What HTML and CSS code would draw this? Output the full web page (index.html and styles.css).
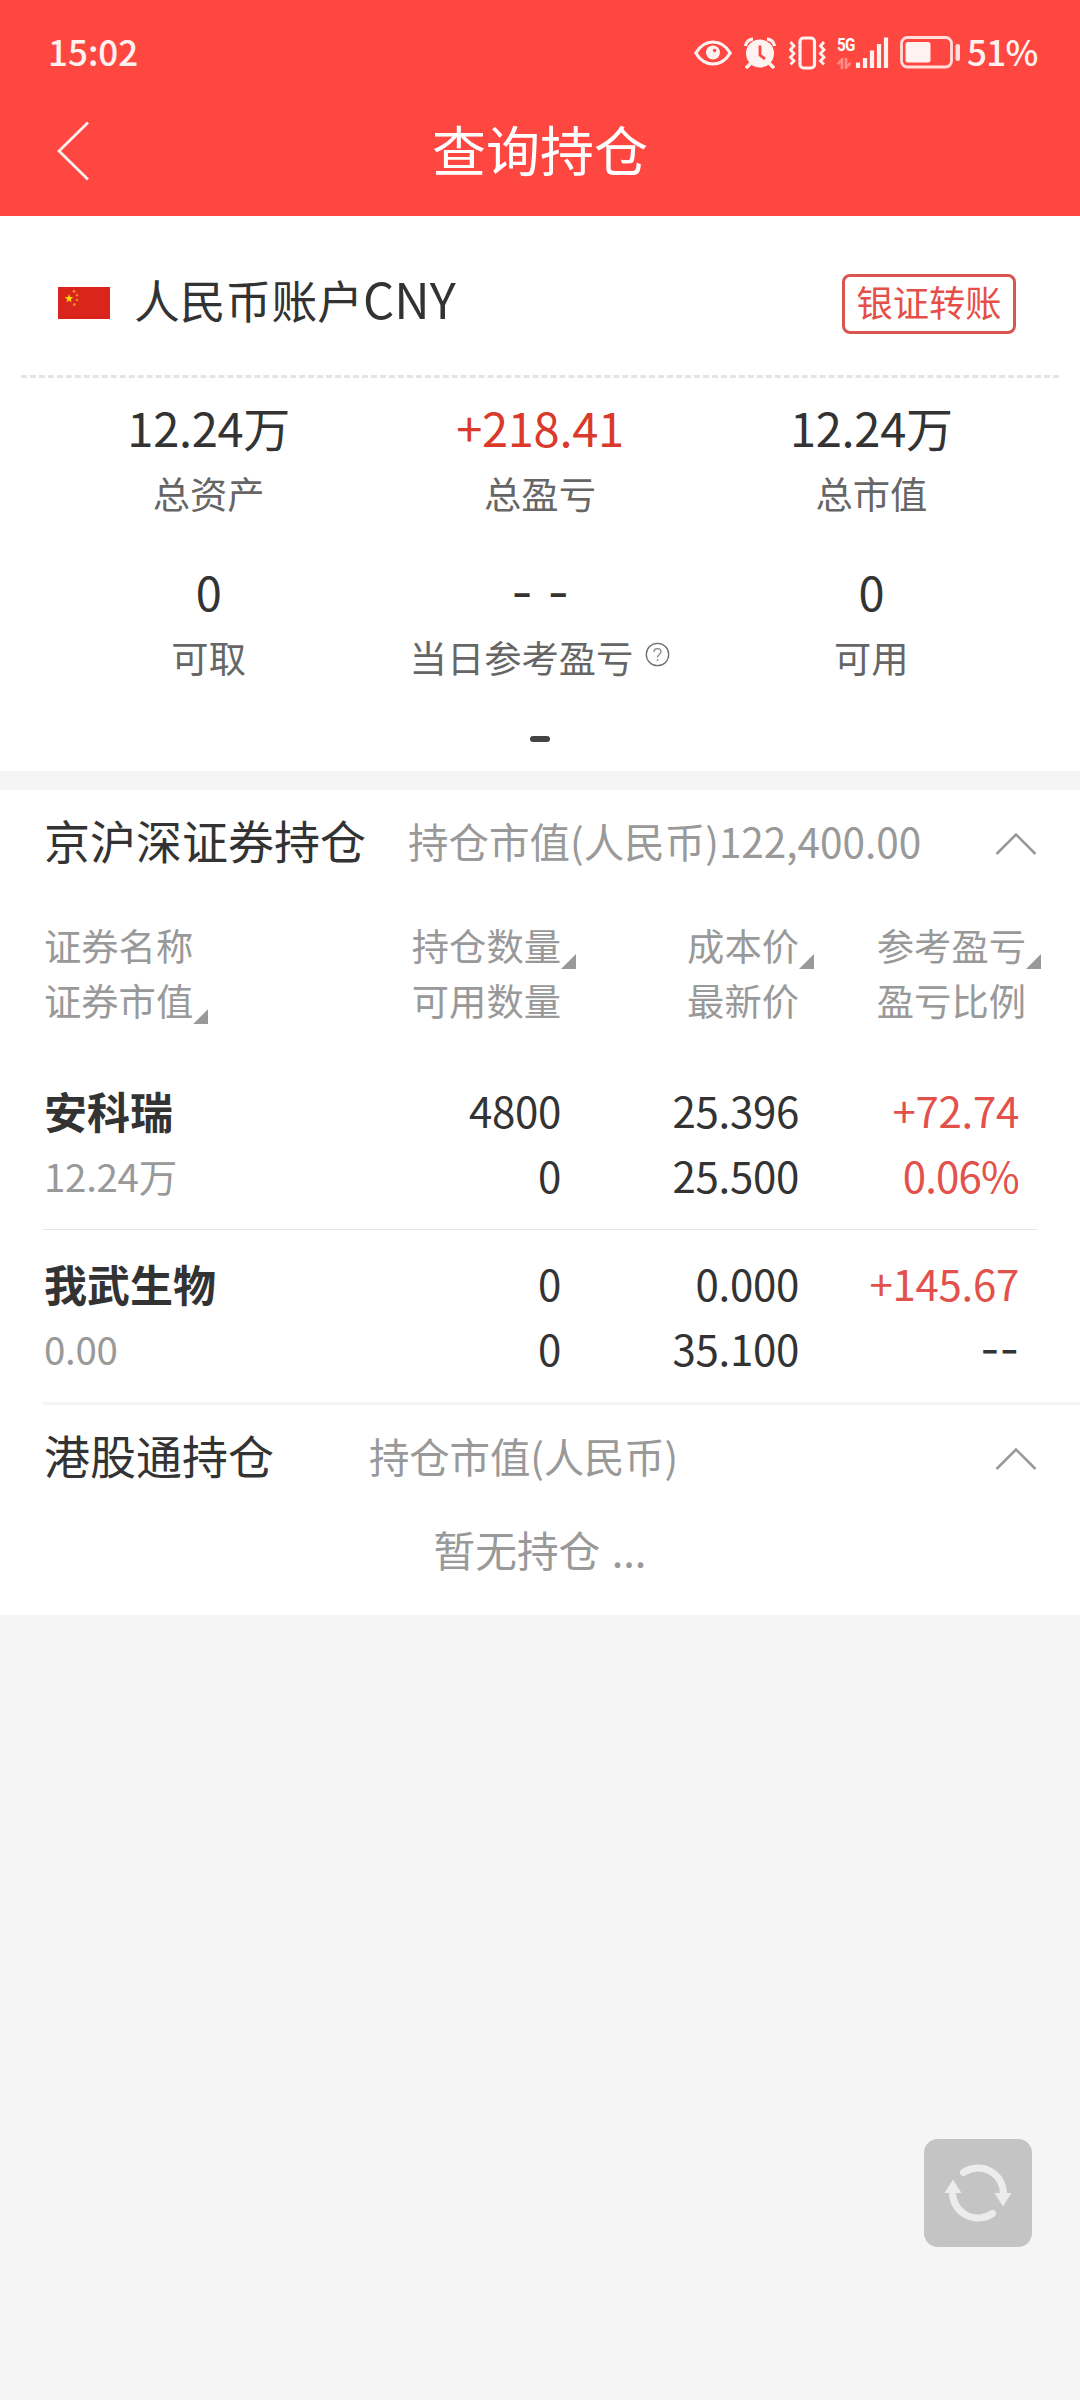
FILE: index.html
```html
<!DOCTYPE html>
<html lang="zh-CN">
<head>
<meta charset="utf-8">
<title>查询持仓</title>
<link rel="stylesheet" href="styles.css">
</head>
<body>
<header class="top">
  <div class="status">
    <span class="time">15:02</span>
    <div class="status-icons">
      <svg class="i-eye" width="38" height="26" viewBox="0 0 38 26"><path d="M1.800 13C6 6 12 2 19 2s13 4 17.200 11C32 20 26 24 19 24S6 20 1.800 13Z" fill="none" stroke="#fff3f1" stroke-width="3.200"/><circle cx="19" cy="12.500" r="7" fill="#fff3f1"/><circle cx="20.600" cy="10.500" r="1.700" fill="#ff4742"/></svg>
      <svg class="i-alarm" width="32" height="32" viewBox="0 0 32 32"><circle cx="16" cy="16.500" r="14" fill="#fff3f1"/><path d="M1.500 9A9 9 0 0 1 9 1.800M30.500 9A9 9 0 0 0 23 1.800" fill="none" stroke="#fff3f1" stroke-width="3.200"/><path d="M6 27l-3 3M26 27l3 3" stroke="#fff3f1" stroke-width="3.500" stroke-linecap="round"/><path d="M16 8.500V18l5 4" fill="none" stroke="#ff4742" stroke-width="2.800"/></svg>
      <svg class="i-vib" width="38" height="34" viewBox="0 0 38 34"><rect x="12" y="2" width="14.500" height="30" rx="3.500" fill="none" stroke="#fff3f1" stroke-width="3.200"/><path d="M2.500 6l3.500 4-3.500 3.800L6 17.500l-3.500 3.800L6 25l-3.500 3.500M36 6l-3.500 4 3.500 3.800-3.500 3.700 3.500 3.800L32.500 25l3.500 3.500" fill="none" stroke="#fff3f1" stroke-width="2.800"/></svg>
      <div class="cell">
        <div class="net"><span class="net-type">5G</span>
          <svg width="15" height="11" viewBox="0 0 15 11"><path d="M5 11V1.500L.800 6M9 0v9.500L13.500 5" fill="none" stroke="#ff8a86" stroke-width="2.600"/></svg>
        </div>
        <svg class="bars" width="34" height="33" viewBox="0 0 34 33"><path d="M3 32v-5.500M10 32v-10M17 32V14.500M24 32V8M31 32V1.500" stroke="#fff3f1" stroke-width="4.200"/></svg>
      </div>
      <svg class="i-bat" width="61" height="33" viewBox="0 0 61 33"><rect x="1.500" y="1.500" width="50" height="29.500" rx="6" fill="none" stroke="#ffdedb" stroke-width="2.800"/><rect x="5.500" y="6" width="25" height="20.500" rx="2.500" fill="#fff3f1"/><rect x="55.500" y="8" width="4.500" height="17" rx="2" fill="#ffdedb"/></svg>
      <span class="pct">51%</span>
    </div>
  </div>
  <nav class="nav">
    <svg class="back" width="36" height="62" viewBox="0 0 36 62"><path d="M34 2.500L5 31l29 28.500" fill="none" stroke="#fff0ee" stroke-width="2.800"/></svg>
    <h1>查询持仓</h1>
  </nav>
</header>

<section class="account">
  <div class="account-head">
    <svg class="flag" width="52" height="32" viewBox="0 0 52 32"><rect width="52" height="32" fill="#da251d"/><path d="M11 7l1 3.100 3.300.1-2.600 2 .9 3.100-2.600-1.900-2.600 1.900.9-3.100-2.600-2 3.300-.1Z" fill="#ffde00"/><g fill="#e8881c"><circle cx="16" cy="4.300" r="1.500"/><circle cx="19" cy="8.300" r="1.300"/><circle cx="19" cy="13" r="1.300"/><circle cx="16.300" cy="17.500" r="1.500"/></g></svg>
    <span class="account-name">人民币账户<span class="latin">CNY</span></span>
    <a class="transfer">银证转账</a>
  </div>
  <div class="stats">
    <div class="stat"><div class="value">12.24万</div><div class="label">总资产</div></div>
    <div class="stat"><div class="value up">+218.41</div><div class="label">总盈亏</div></div>
    <div class="stat"><div class="value">12.24万</div><div class="label">总市值</div></div>
    <div class="stat"><div class="value">0</div><div class="label">可取</div></div>
    <div class="stat"><div class="value dash">- -</div><div class="label">当日参考盈亏<svg class="help" width="25" height="25" viewBox="0 0 25 25"><circle cx="12.500" cy="12.500" r="11.200" fill="none" stroke="#6f6f6f" stroke-width="1.300"/><path d="M9 10c0-4.500 7-4.500 7-.3 0 2.600-3.500 2.800-3.500 5.800M12.500 17.300v1.600" fill="none" stroke="#7f838c" stroke-width="1.300"/></svg></div></div>
    <div class="stat"><div class="value">0</div><div class="label">可用</div></div>
  </div>
  <div class="pager"></div>
</section>

<section class="holdings">
  <div class="sec-head">
    <h2>京沪深证券持仓</h2>
    <span class="sum">持仓市值(人民币)122,400.00</span>
    <svg class="chev" width="42" height="24" viewBox="0 0 42 24"><path d="M1.500 22L21 2.500 40.500 22" fill="none" stroke="#999" stroke-width="2.500"/></svg>
  </div>
  <div class="cols head">
    <div class="c1"><div>证券名称</div><div>证券市值<i class="tri"></i></div></div>
    <div class="c2"><div>持仓数量<i class="tri"></i></div><div>可用数量</div></div>
    <div class="c3"><div>成本价<i class="tri"></i></div><div>最新价</div></div>
    <div class="c4"><div>参考盈亏<i class="tri"></i></div><div>盈亏比例</div></div>
  </div>
  <div class="cols row">
    <div class="c1"><div class="name">安科瑞</div><div class="worth">12.24万</div></div>
    <div class="c2"><div>4800</div><div>0</div></div>
    <div class="c3"><div>25.396</div><div>25.500</div></div>
    <div class="c4 gain"><div>+72.74</div><div class="ratio">0.06%</div></div>
  </div>
  <div class="cols row">
    <div class="c1"><div class="name">我武生物</div><div class="worth">0.00</div></div>
    <div class="c2"><div>0</div><div>0</div></div>
    <div class="c3"><div>0.000</div><div>35.100</div></div>
    <div class="c4"><div class="gain">+145.67</div><div class="dash">--</div></div>
  </div>
</section>

<section class="hk">
  <div class="sec-head">
    <h2>港股通持仓</h2>
    <span class="sum">持仓市值(人民币)</span>
    <svg class="chev" width="42" height="24" viewBox="0 0 42 24"><path d="M1.500 22L21 2.500 40.500 22" fill="none" stroke="#999" stroke-width="2.500"/></svg>
  </div>
  <p class="empty">暂无持仓 ...</p>
</section>

<button class="refresh" aria-label="刷新">
  <svg width="72" height="64" viewBox="-36 -32 72 64"><g id="arc"><path d="M-14.500 -20.500A25.500 25.500 0 0 1 25.500 1" fill="none" stroke="#ececec" stroke-width="7" stroke-linecap="round"/><path d="M16.500 0H33.500L25 13.500Z" fill="#ececec"/></g><use href="#arc" transform="rotate(180)"/></svg>
</button>
</body>
</html>
```
FILE: styles.css
```css
* { box-sizing: border-box; margin: 0; padding: 0; }
body {
  min-height: 2400px;
  background: #f5f5f5;
  color: #333;
  font-family: "Noto Sans CJK SC", sans-serif;
  position: relative;
}
svg { display: block; flex: none; }

.top { height: 216px; background: #ff4742; color: #fff; }
.status { height: 105px; padding: 0 43px 0 48px; display: flex; align-items: center; justify-content: space-between; }
.time, .pct { font-size: 35px; line-height: 50px; font-weight: 500; color: #fff3f1; margin-top: -4px; }
.status-icons { display: flex; align-items: center; }
.i-alarm { margin-left: 12px; }
.i-vib { margin-left: 12px; }
.cell { display: flex; margin-left: 11px; height: 33px; }
.net { width: 18px; display: flex; flex-direction: column; justify-content: space-between; }
.net-type { font: 700 19px/17px "Roboto", sans-serif; letter-spacing: -1px; transform: scaleX(.8); transform-origin: left; }
.i-bat { margin-left: 11px; }
.pct { margin-left: 6px; width: 70px; white-space: nowrap; letter-spacing: -.7px; }

.nav { height: 90px; padding: 0 54px; display: grid; grid-template-columns: 36px 1fr 36px; align-items: center; }
.back { margin-top: 2px; }
.nav h1 { font-size: 54px; line-height: 84px; font-weight: 400; text-align: center; margin-top: -3px; }

.account { height: 555px; background: #fff; }
.account-head { height: 162px; margin: 0 21px; padding: 0 43px 0 37px; display: flex; align-items: center; border-bottom: 3px dashed #e4e4e4; padding-top: 14px; }
.account-name { margin-left: 24px; font-size: 45.800px; line-height: 70px; margin-top: -8px; }
.latin { font-size: 49px; line-height: 1; }
.transfer { margin-left: auto; margin-top: 2px; width: 174px; height: 60px; border: 3px solid #d95550; border-radius: 8px; color: #e64f49; font-size: 36.300px; line-height: 49px; text-align: center; }
.stats { display: grid; grid-template-columns: repeat(3, 1fr); padding: 18px 43px 0; row-gap: 34px; }
.stat { height: 130px; text-align: center; }
.value { font-size: 47px; line-height: 61px; letter-spacing: -.3px; }
.up { color: #d93a2b; }
.label { font-size: 37.300px; line-height: 64px; color: #666; display: flex; justify-content: center; height: 64px; margin-top: 4px; }
.help { margin: 17px 0 0 12px; }
.dash { font-family: "Inter", sans-serif; }
.value.dash { word-spacing: 2px; padding-top: 2px; height: 61px; }
.pager { width: 20px; height: 6px; border-radius: 3px; background: #444; margin: 46px auto 0; }

.holdings { margin-top: 19px; background: #fff; height: 612px; }
.sec-head { display: flex; align-items: center; height: 104px; padding: 0 43px 4px 44px; }
.sec-head h2 { font-size: 46px; line-height: 70px; font-weight: 400; margin-top: -3px; }
.sum { font-size: 40.500px; line-height: 60px; color: #999; margin: 2px 0 0 42px; }
.chev { margin: 7px 0 0 auto; }

.cols { display: grid; grid-template-columns: 240px 278px 238px 1fr; margin-left: 43px; }
.c1 { padding-left: 1px; }
.c2, .c3, .c4 { text-align: right; }
.head { font-size: 37.300px; line-height: 55px; color: #999; padding: 24px 54px 0 0; height: 164px; }
.head .c1 > div, .head .c2 > div, .head .c3 > div, .head .c4 > div { position: relative; }
.tri { position: absolute; width: 15px; height: 15px; bottom: 4px; background: #999; clip-path: polygon(100% 0, 100% 100%, 0 100%); }
.row { margin-right: 43px; padding: 19px 18px 0 0; height: 171px; font-size: 42px; line-height: 65px; letter-spacing: -.3px; }
.row + .row { padding-top: 20px; border-top: 1px solid #e4e4e4; height: 172px; }
.name { font-size: 43px; font-weight: 700; letter-spacing: 0; padding-top: 1px; height: 65px; }
.worth { font-size: 38.500px; color: #999; padding-top: 1px; }
.gain { color: #e2514b; }
.ratio { letter-spacing: -.8px; }
.row .dash { padding-top: 2px; letter-spacing: 0; }

.hk { background: #fff; height: 213px; }
.hk::before { content: ""; display: block; height: 3px; margin-left: 43px; background: #f4f4f4; }
.hk .sec-head { height: 104px; padding-bottom: 4px; }
.hk .sum { margin-left: 95px; letter-spacing: -.2px; }
.empty { text-align: center; font-size: 41.700px; line-height: 80px; color: #999; word-spacing: 2px; }

.refresh { position: absolute; left: 924px; top: 2139px; width: 108px; height: 108px; border: 0; border-radius: 14px; background: #c4c4c4; display: grid; place-items: center; }
```
